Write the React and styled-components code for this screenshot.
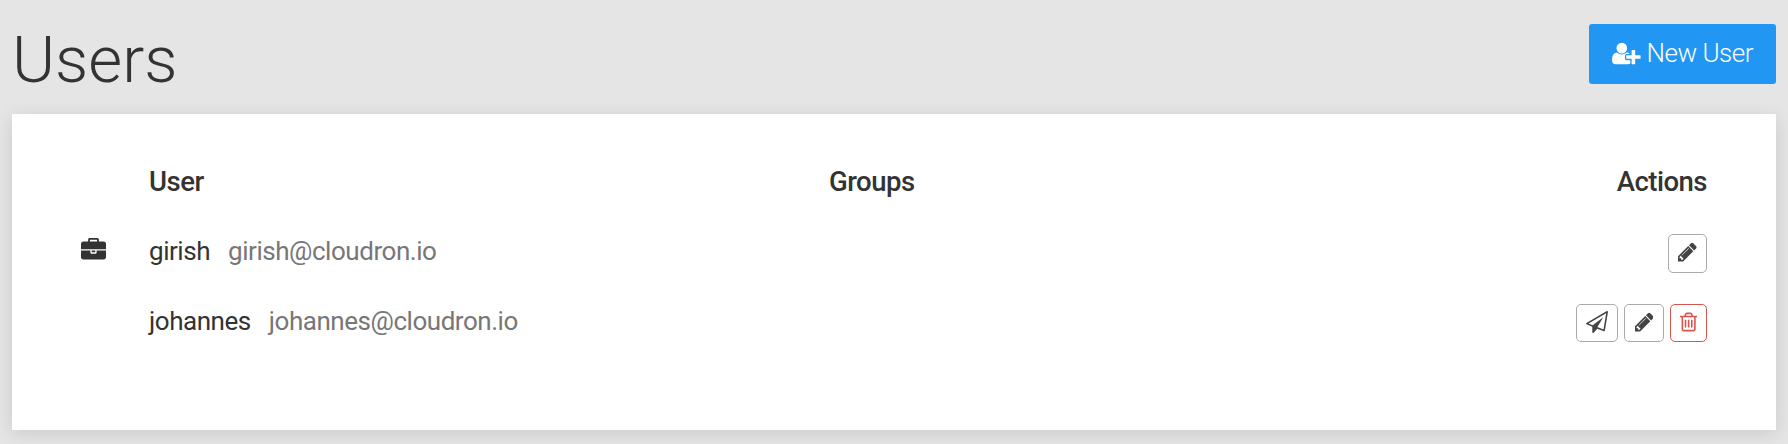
import React from 'react';
import styled, { createGlobalStyle } from 'styled-components';

const GlobalStyle = createGlobalStyle`
  *, *::before, *::after { box-sizing: border-box; }
  body {
    margin: 0;
    background: #e5e5e5;
    color: #333;
    font-family: Roboto, "Liberation Sans", sans-serif;
    font-size: 26px;
    letter-spacing: -0.46px;
    line-height: 35px;
  }
`;

const Page = styled.main`
  height: 444px;
  padding: 0 12px;
  overflow: hidden;
`;

const Header = styled.header`
  display: flex;
  justify-content: space-between;
  align-items: flex-start;
  height: 114px;
`;

const Title = styled.h1`
  margin: 25px 0 0;
  font-size: 65.5px;
  font-weight: 300;
  letter-spacing: 0;
  line-height: 70px;
`;

const PrimaryButton = styled.button`
  display: flex;
  align-items: center;
  gap: 6px;
  width: 187px;
  height: 60px;
  margin-top: 24px;
  padding: 0 0 2px 23px;
  border: 0;
  border-radius: 3px;
  background: #2196f3;
  color: #fff;
  font: 300 26px Roboto, "Liberation Sans", sans-serif;
  letter-spacing: -0.5px;
  white-space: nowrap;
`;

const Card = styled.section`
  height: 316px;
  padding: 46px 69px 0 65px;
  background: #fff;
  box-shadow: 0 3.5px 17.5px rgba(0, 0, 0, 0.12);
`;

const Row = styled.div`
  display: grid;
  grid-template-columns: 72px 680px 1fr auto;
  align-items: start;
  height: 69.75px;
  padding-top: 5px;
`;

const HeadRow = styled(Row)`
  height: 69px;
  padding-top: 4px;
  font-size: 27.5px;
  font-weight: 500;
  letter-spacing: -0.5px;
`;

const RoleIcon = styled.span`
  display: flex;
  padding: 4px 0 0 4px;
`;

const Identity = styled.div`
  display: flex;
  gap: 18px;
`;

const Email = styled.span`
  color: #777;
`;

const Actions = styled.div`
  display: flex;
  gap: 6px;
`;

const ActionButton = styled.button`
  display: flex;
  align-items: center;
  justify-content: center;
  width: ${(p) => p.$width}px;
  height: 38.5px;
  padding: 0 0 2px;
  border: 1px solid ${(p) => (p.$danger ? '#d9534f' : '#aaa')};
  border-radius: 5px;
  background: #fff;
  color: ${(p) => (p.$danger ? '#d9534f' : '#444')};
`;

const Glyph = styled.svg`
  display: block;
  flex: none;
  fill: currentColor;
  height: ${(p) => p.$size}px;
  width: ${(p) => (p.$size * p.$advance) / 1792}px;
`;

const icons = {
  userPlus: {
    x: 0, advance: 2048,
    d: 'M704 896q-159 0-271.5-112.5t-112.5-271.5 112.5-271.5 271.5-112.5 271.5 112.5 112.5 271.5-112.5 271.5-271.5 112.5zm960 128h352q13 0 22.5 9.5t9.5 22.5v192q0 13-9.5 22.5t-22.5 9.5h-352v352q0 13-9.5 22.5t-22.5 9.5h-192q-13 0-22.5-9.5t-9.5-22.5v-352h-352q-13 0-22.5-9.5t-9.5-22.5v-192q0-13 9.5-22.5t22.5-9.5h352v-352q0-13 9.5-22.5t22.5-9.5h192q13 0 22.5 9.5t9.5 22.5v352zm-736 224q0 52 38 90t90 38h256v238q-68 50-171 50h-874q-121 0-194-69t-73-190q0-53 3.5-103.5t14-109 26.5-108.5 43-97.5 62-81 85.5-53.5 111.5-20q19 0 39 17 79 61 154.5 91.5t164.5 30.5 164.5-30.5 154.5-91.5q20-17 39-17 132 0 217 96h-223q-52 0-90 38t-38 90v192z',
  },
  briefcase: {
    x: 0, advance: 1792,
    d: 'M640 256h512v-128h-512v128zm1152 640v480q0 66-47 113t-113 47h-1472q-66 0-113-47t-47-113v-480h672v160q0 26 19 45t45 19h320q26 0 45-19t19-45v-160h672zm-768 0v128h-256v-128h256zm768-480v384h-1792v-384q0-66 47-113t113-47h352v-160q0-40 28-68t68-28h576q40 0 68 28t28 68v160h352q66 0 113 47t47 113z',
  },
  pencil: {
    x: 128, advance: 1536,
    d: 'M491 1536l91-91-235-235-91 91v107h128v128h107zm523-928q0-22-22-22-10 0-17 7l-542 542q-7 7-7 17 0 22 22 22 10 0 17-7l542-542q7-7 7-17zm-54-192l416 416-832 832h-416v-416zm683 96q0 53-37 90l-166 166-416-416 166-165q36-38 90-38 53 0 91 38l235 234q37 39 37 91z',
  },
  paperPlane: {
    x: 0, advance: 1792,
    d: 'M1764 11q33 24 27 64l-256 1536q-5 29-32 45-14 8-31 8-11 0-24-5l-527-215-298 327q-18 21-47 21-14 0-23-4-19-7-30-23.5t-11-36.5v-452l-472-193q-37-14-40-55-3-39 32-59l1664-960q35-21 68 2zm-342 1499l221-1323-1434 827 336 137 863-639-478 797z',
  },
  trash: {
    x: 192, advance: 1408,
    d: 'M704 736v576q0 14-9 23t-23 9h-64q-14 0-23-9t-9-23v-576q0-14 9-23t23-9h64q14 0 23 9t9 23zm256 0v576q0 14-9 23t-23 9h-64q-14 0-23-9t-9-23v-576q0-14 9-23t23-9h64q14 0 23 9t9 23zm256 0v576q0 14-9 23t-23 9h-64q-14 0-23-9t-9-23v-576q0-14 9-23t23-9h64q14 0 23 9t9 23zm128 724v-948h-896v948q0 22 7 40.5t14.5 27 10.5 8.5h832q3 0 10.5-8.5t14.5-27 7-40.5zm-672-1076h448l-48-117q-7-9-17-11h-317q-10 2-17 11zm928 32v64q0 14-9 23t-23 9h-96v948q0 83-47 143.5t-113 60.5h-832q-66 0-113-58.5t-47-141.5v-952h-96q-14 0-23-9t-9-23v-64q0-14 9-23t23-9h309l70-167q15-37 54-63t79-26h320q40 0 79 26t54 63l70 167h309q14 0 23 9t9 23z',
  },
};

function Icon({ name, size }) {
  const { x, advance, d } = icons[name];
  return (
    <Glyph $size={size} $advance={advance} viewBox={`${x} 0 ${advance} 1792`} aria-hidden="true">
      <path d={d} />
    </Glyph>
  );
}

const users = [
  { name: 'girish', email: 'girish@cloudron.io', admin: true },
  { name: 'johannes', email: 'johannes@cloudron.io', admin: false },
];

function UserRow({ user }) {
  return (
    <Row>
      <RoleIcon>{user.admin && <Icon name="briefcase" size={25} />}</RoleIcon>
      <Identity>
        <span>{user.name}</span>
        <Email>{user.email}</Email>
      </Identity>
      <span />
      <Actions>
        {!user.admin && (
          <ActionButton $width={42} aria-label="Send invite">
            <Icon name="paperPlane" size={22} />
          </ActionButton>
        )}
        <ActionButton $width={user.admin ? 39 : 40} aria-label="Edit user">
          <Icon name="pencil" size={22} />
        </ActionButton>
        {!user.admin && (
          <ActionButton $width={37} $danger aria-label="Delete user">
            <Icon name="trash" size={22} />
          </ActionButton>
        )}
      </Actions>
    </Row>
  );
}

export default function App() {
  return (
    <Page>
      <GlobalStyle />
      <Header>
        <Title>Users</Title>
        <PrimaryButton>
          <Icon name="userPlus" size={25} />
          New User
        </PrimaryButton>
      </Header>
      <Card>
        <HeadRow>
          <span />
          <span>User</span>
          <span>Groups</span>
          <span>Actions</span>
        </HeadRow>
        {users.map((user) => (
          <UserRow key={user.name} user={user} />
        ))}
      </Card>
    </Page>
  );
}
